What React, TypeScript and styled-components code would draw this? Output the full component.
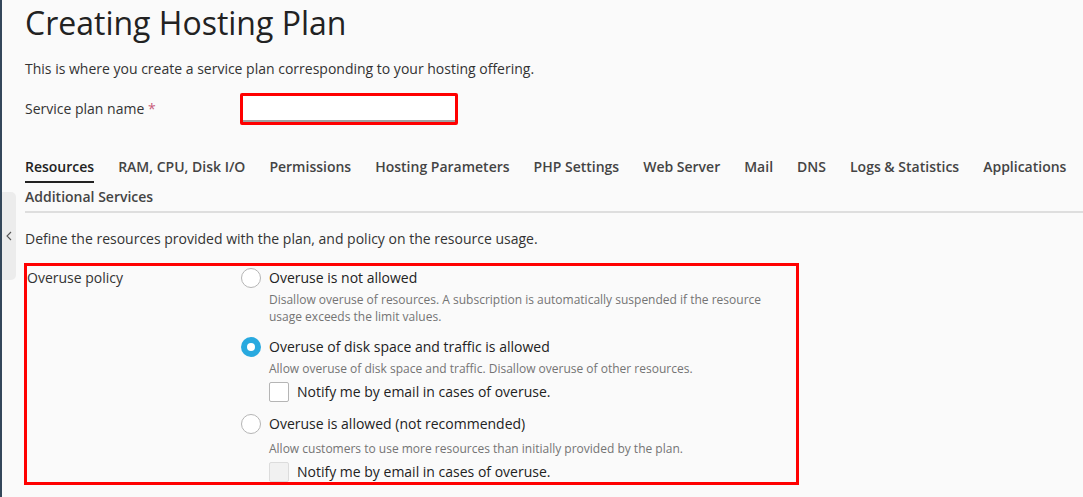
import React from "react";
import styled, { createGlobalStyle } from "styled-components";

const GlobalStyle = createGlobalStyle`
  html, body {
    margin: 0;
    padding: 0;
    background: #fafafa;
  }
  body {
    font-family: "Open Sans", "Liberation Sans", sans-serif;
    color: #222;
  }
`;

const Shell = styled.div`
  display: flex;
  min-height: 497px;
  position: relative;
`;

const SideEdge = styled.div`
  width: 2px;
  flex: none;
  background: #34475a;
`;

const CollapseTab = styled.button`
  position: absolute;
  left: 2px;
  top: 192px;
  width: 14px;
  height: 88px;
  border: none;
  padding: 0;
  border-radius: 0 5px 5px 0;
  background: #ececec;
  color: #555;
  display: flex;
  align-items: center;
  justify-content: center;
  cursor: pointer;
`;

const Main = styled.main`
  flex: 1;
  padding: 0 0 0 23px;
`;

const Title = styled.h1`
  margin: 0;
  padding-top: 1px;
  font-size: 32px;
  line-height: 44px;
  font-weight: 400;
  color: #222;
`;

const Intro = styled.p`
  margin: 14px 0 0;
  font-size: 14px;
  line-height: 20px;
  color: #333;
`;

const FieldRow = styled.div`
  display: flex;
  align-items: center;
  margin-top: 14px;
`;

const FieldLabel = styled.label`
  width: 215px;
  flex: none;
  font-size: 14px;
  line-height: 20px;
  color: #333;
`;

const Required = styled.span`
  color: #c85c7a;
`;

const TextInput = styled.input`
  box-sizing: border-box;
  width: 218px;
  height: 32px;
  border: 3px solid #ff0000;
  border-radius: 2px;
  background: #fff;
  box-shadow: inset 0 -2px 0 #a0a0a0;
  outline: none;
`;

const Tabs = styled.nav`
  display: flex;
  flex-wrap: wrap;
  column-gap: 24px;
  row-gap: 6px;
  margin-top: 32px;
  border-bottom: 2px solid #dedede;
`;

const Tab = styled.a<{ $active?: boolean }>`
  font-size: 14px;
  line-height: 20px;
  font-weight: 600;
  color: ${(p) => (p.$active ? "#222" : "#444")};
  padding-bottom: 4px;
  margin-bottom: -2px;
  border-bottom: 2px solid ${(p) => (p.$active ? "#222" : "transparent")};
  text-decoration: none;
  white-space: nowrap;
`;

const SectionText = styled.p`
  margin: 16px 0 0;
  font-size: 14px;
  line-height: 20px;
  color: #333;
`;

const PolicyBox = styled.section`
  box-sizing: border-box;
  width: 775px;
  margin: 14px 0 0 -1px;
  border: 3px solid #ff0000;
  display: flex;
  padding: 2px 0 0;
`;

const PolicyLabel = styled.div`
  width: 214px;
  flex: none;
  font-size: 14px;
  line-height: 20px;
  color: #333;
`;

const Options = styled.div`
  display: flex;
  flex-direction: column;
`;

const Option = styled.div`
  & + & {
    margin-top: 12px;
  }
`;

const RadioLine = styled.label`
  display: flex;
  align-items: center;
  gap: 8px;
  font-size: 14px;
  line-height: 20px;
  color: #222;
`;

const Radio = styled.span<{ $checked?: boolean }>`
  box-sizing: border-box;
  width: 20px;
  height: 20px;
  border-radius: 50%;
  flex: none;
  border: ${(p) => (p.$checked ? "none" : "1px solid #b5b5b5")};
  background: ${(p) => (p.$checked ? "#28a9df" : "#fff")};
  display: flex;
  align-items: center;
  justify-content: center;
  &::after {
    content: "";
    display: ${(p) => (p.$checked ? "block" : "none")};
    width: 8px;
    height: 8px;
    border-radius: 50%;
    background: #fff;
  }
`;

const Hint = styled.div<{ $spaced?: boolean }>`
  margin: ${(p) => (p.$spaced ? "6px" : "3px")} 0 0 28px;
  max-width: 500px;
  font-size: 12px;
  line-height: 17px;
  color: #747474;
`;

const CheckLine = styled.label`
  display: flex;
  align-items: center;
  gap: 8px;
  margin: 5px 0 0 28px;
  font-size: 14px;
  line-height: 20px;
  color: #222;
`;

const Box = styled.span<{ $disabled?: boolean }>`
  box-sizing: border-box;
  width: 20px;
  height: 20px;
  flex: none;
  border-radius: 2px;
  border: 1px solid ${(p) => (p.$disabled ? "#dcdcdc" : "#b5b5b5")};
  background: ${(p) => (p.$disabled ? "#f1f1f1" : "#fff")};
`;

const tabs = [
  "Resources",
  "RAM, CPU, Disk I/O",
  "Permissions",
  "Hosting Parameters",
  "PHP Settings",
  "Web Server",
  "Mail",
  "DNS",
  "Logs & Statistics",
  "Applications",
  "Additional Services",
];

export default function App() {
  return (
    <Shell>
      <GlobalStyle />
      <SideEdge />
      <CollapseTab aria-label="Collapse">
        <svg width="6" height="10" viewBox="0 0 6 10">
          <path d="M5 1 L1 5 L5 9" fill="none" stroke="#555" strokeWidth="1.1" />
        </svg>
      </CollapseTab>
      <Main>
        <Title>Creating Hosting Plan</Title>
        <Intro>This is where you create a service plan corresponding to your hosting offering.</Intro>
        <FieldRow>
          <FieldLabel>
            Service plan name <Required>*</Required>
          </FieldLabel>
          <TextInput />
        </FieldRow>

        <Tabs>
          {tabs.map((t, i) => (
            <Tab key={t} $active={i === 0}>
              {t}
            </Tab>
          ))}
        </Tabs>

        <SectionText>Define the resources provided with the plan, and policy on the resource usage.</SectionText>

        <PolicyBox>
          <PolicyLabel>Overuse policy</PolicyLabel>
          <Options>
            <Option>
              <RadioLine>
                <Radio />
                Overuse is not allowed
              </RadioLine>
              <Hint>
                Disallow overuse of resources. A subscription is automatically suspended if the resource usage exceeds
                the limit values.
              </Hint>
            </Option>
            <Option>
              <RadioLine>
                <Radio $checked />
                Overuse of disk space and traffic is allowed
              </RadioLine>
              <Hint>Allow overuse of disk space and traffic. Disallow overuse of other resources.</Hint>
              <CheckLine>
                <Box />
                Notify me by email in cases of overuse.
              </CheckLine>
            </Option>
            <Option>
              <RadioLine>
                <Radio />
                Overuse is allowed (not recommended)
              </RadioLine>
              <Hint $spaced>Allow customers to use more resources than initially provided by the plan.</Hint>
              <CheckLine>
                <Box $disabled />
                Notify me by email in cases of overuse.
              </CheckLine>
            </Option>
          </Options>
        </PolicyBox>
      </Main>
    </Shell>
  );
}
